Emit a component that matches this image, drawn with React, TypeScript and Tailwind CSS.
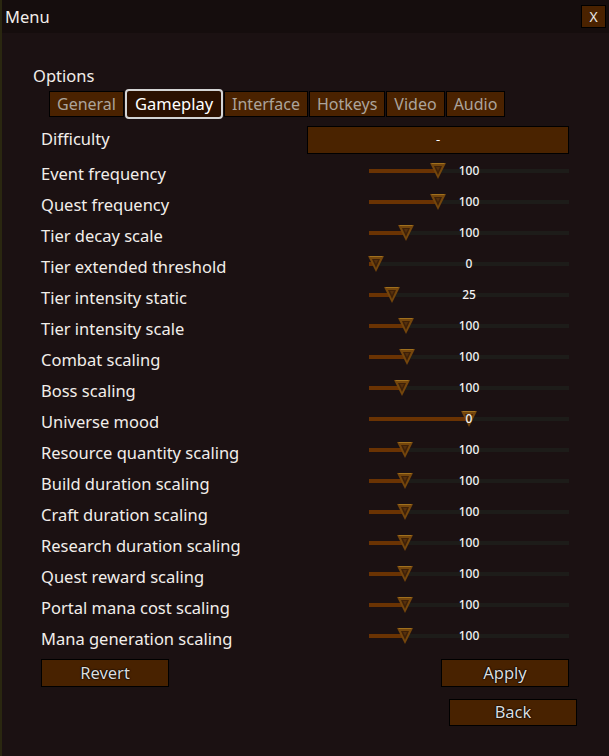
import React from 'react';

const tabs = ['General', 'Gameplay', 'Interface', 'Hotkeys', 'Video', 'Audio'];

// thumb centre in px from the track's left edge (track is 200px wide)
const sliders: { label: string; value: string; pos: number }[] = [
  { label: 'Event frequency', value: '100', pos: 69 },
  { label: 'Quest frequency', value: '100', pos: 69 },
  { label: 'Tier decay scale', value: '100', pos: 37 },
  { label: 'Tier extended threshold', value: '0', pos: 7 },
  { label: 'Tier intensity static', value: '25', pos: 23 },
  { label: 'Tier intensity scale', value: '100', pos: 37 },
  { label: 'Combat scaling', value: '100', pos: 38 },
  { label: 'Boss scaling', value: '100', pos: 33 },
  { label: 'Universe mood', value: '0', pos: 100 },
  { label: 'Resource quantity scaling', value: '100', pos: 36 },
  { label: 'Build duration scaling', value: '100', pos: 36 },
  { label: 'Craft duration scaling', value: '100', pos: 36 },
  { label: 'Research duration scaling', value: '100', pos: 36 },
  { label: 'Quest reward scaling', value: '100', pos: 36 },
  { label: 'Portal mana cost scaling', value: '100', pos: 36 },
  { label: 'Mana generation scaling', value: '100', pos: 36 },
];

function Thumb() {
  return (
    <svg width="16" height="16" viewBox="0 0 16 16">
      <polygon points="0,0 16,0 8,16" fill="#74460c" />
      <polygon points="1,0 15,0 14,1 2,1" fill="#a0701e" />
      <polygon points="4,3 12,3 8,12" fill="#3e2008" />
      <polygon points="6,4 10,4 8,8" fill="#55300c" />
    </svg>
  );
}

function Slider({ value, pos }: { value: string; pos: number }) {
  return (
    <div className="relative w-[200px] h-[16px]">
      <div className="absolute left-0 right-0 top-[6px] h-[4px] bg-[#1d1c19]" />
      <div className="absolute left-0 top-[6px] h-[4px] bg-[#6a3303]" style={{ width: pos }} />
      <div className="absolute top-0" style={{ left: pos - 8 }}>
        <Thumb />
      </div>
      <div className="absolute inset-0 flex items-center justify-center text-[12px] font-medium text-[#f2f2f2] leading-none">
        {value}
      </div>
    </div>
  );
}

function BrownButton({ children, className = '' }: { children: React.ReactNode; className?: string }) {
  return (
    <div
      className={`flex items-center justify-center bg-[#482200] border border-black text-[16.5px] text-[#dcdcdc] [text-shadow:0_0_1px_#000,0_0_1px_#000,0_0_2px_#000] ${className}`}
    >
      {children}
    </div>
  );
}

export default function App() {
  return (
    <div
      className="w-[609px] h-[756px] bg-[#1b1112] border-l-2 border-[#2a2710] text-[#f2eeea] overflow-hidden"
      style={{ fontFamily: '"Noto Sans", "Open Sans", sans-serif' }}
    >
      <div className="h-[33px] flex items-start justify-between bg-[#150d0d] pl-[3px] pr-[3px]">
        <span className="text-[16.5px] leading-[33px]">Menu</span>
        <div className="mt-[5px] w-[25px] h-[23px] flex items-center justify-center bg-[#4a2200] border border-black text-[14px] text-[#e6e6e6]">
          X
        </div>
      </div>

      <div className="pl-[31px] pt-[32px]">
        <div className="text-[16.5px] leading-[22px]">Options</div>
        <div className="flex items-center ml-[16px] mt-[2px] h-[30px]">
          {tabs.map((t) =>
            t === 'Gameplay' ? (
              <div
                key={t}
                className="h-[30px] px-[8px] mr-[1px] flex items-center bg-[#2a1000] border-2 border-[#d4d4d4] rounded-[4px] text-[16.5px] text-white"
              >
                {t}
              </div>
            ) : (
              <div
                key={t}
                className="h-[26px] px-[7px] mr-[1px] flex items-center bg-[#4a2200] border border-black text-[16px] text-[#aca49c]"
              >
                {t}
              </div>
            )
          )}
        </div>
      </div>

      <div className="ml-[39px] w-[528px] mt-[5px] flex flex-col">
        <div className="h-[31px] flex items-center justify-between">
          <span className="text-[16.5px]">Difficulty</span>
          <div className="w-[262px] h-[28px] flex items-center justify-center bg-[#4a2300] border border-black text-[13px] text-white">
            -
          </div>
        </div>
        {sliders.map((s) => (
          <div key={s.label} className="h-[31px] flex items-center justify-between">
            <span className="text-[16.5px] leading-none mt-[7px]">{s.label}</span>
            <Slider value={s.value} pos={s.pos} />
          </div>
        ))}
        <div className="flex justify-between mt-[8px]">
          <BrownButton className="w-[128px] h-[28px]">Revert</BrownButton>
          <BrownButton className="w-[128px] h-[28px]">Apply</BrownButton>
        </div>
        <div className="flex justify-end mt-[12px] -mr-[8px]">
          <BrownButton className="w-[128px] h-[27px]">Back</BrownButton>
        </div>
      </div>
    </div>
  );
}
